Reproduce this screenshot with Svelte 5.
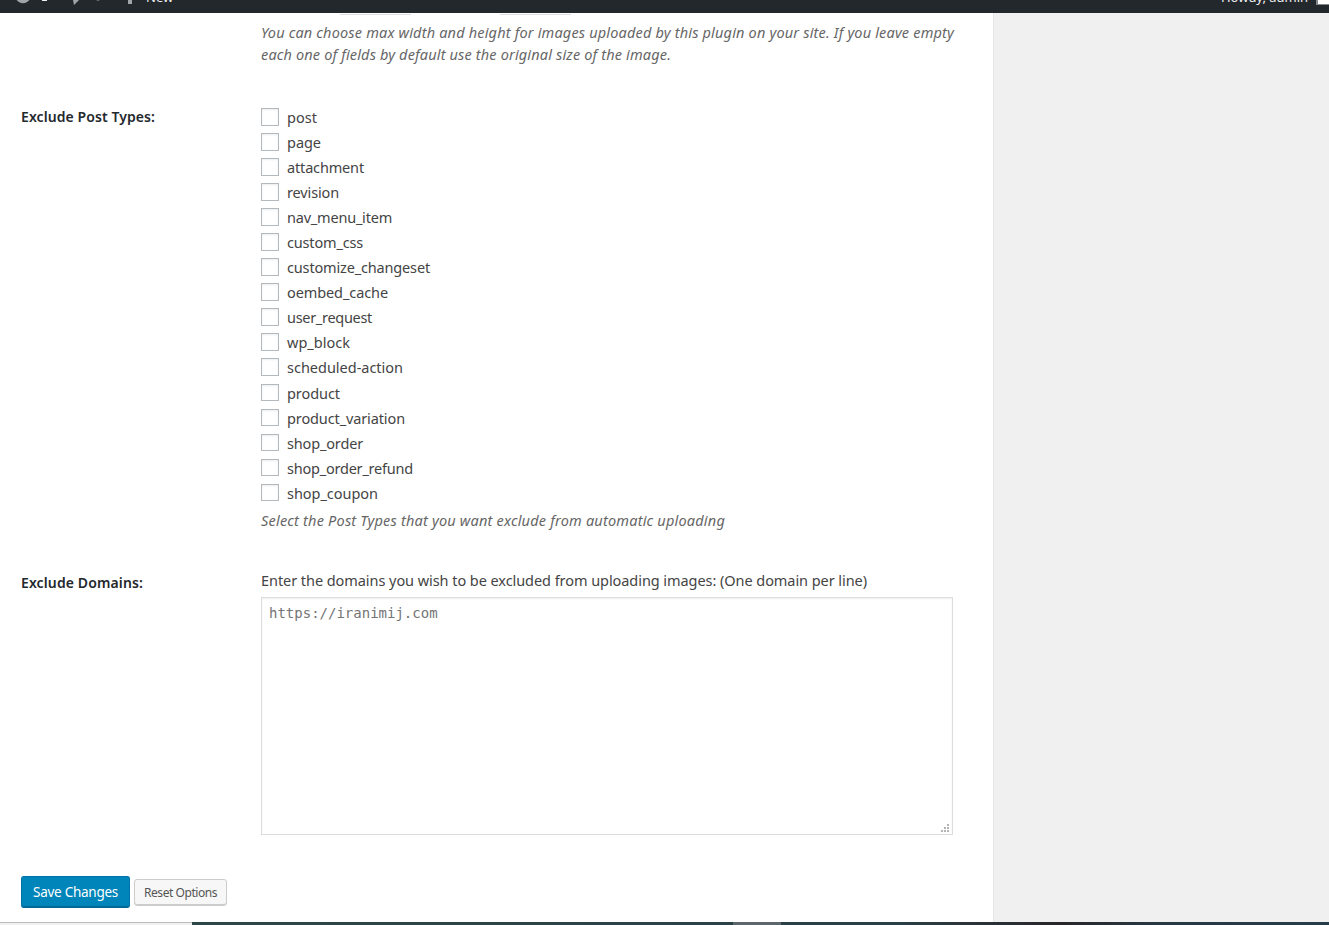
<script>
  const postTypes = [
    ['post', 30], ['page', 34], ['attachment', 77], ['revision', 52],
    ['nav_menu_item', 105], ['custom_css', 76], ['customize_changeset', 143],
    ['oembed_cache', 101], ['user_request', 85], ['wp_block', 63],
    ['scheduled-action', 116], ['product', 53], ['product_variation', 118],
    ['shop_order', 76], ['shop_order_refund', 126], ['shop_coupon', 91]
  ];

  // Spreads the letters of a line so that it fills its set measure.
  function measure(node, width) {
    node.style.letterSpacing = '0px';
    const natural = node.getBoundingClientRect().width;
    node.style.letterSpacing = (width - natural) / node.textContent.length + 'px';
  }
</script>

<div class="page">
  <header>
    <div class="left">
      <svg width="140" height="13" viewBox="0 0 140 13" fill="#a0a5aa">
        <path d="M16 -1a8 8 0 0 0 14 0l-3-1a5 5 0 0 1-8 0z" />
        <path d="M69 -5h15v5h-5l-5 5-1-5h-4z" />
        <path d="M95 -1q3 3 6 0z" />
        <path d="M128 -6h4v10h-4z" />
        <path d="M42 0h5v1h-5z" fill="#eee" />
      </svg>
      <span class="new">New</span>
    </div>
    <div class="account"><span use:measure={87}>Howdy, admin</span><i></i></div>
  </header>

  <main>
    <div class="dimensions"><i></i><i></i></div>
    <p class="hint top">
      <span use:measure={693}>You can choose max width and height for images uploaded by this plugin on your site. If you leave empty</span><br />
      <span use:measure={410}>each one of fields by default use the original size of the image.</span>
    </p>

    <section class="types">
      <h2><span use:measure={134}>Exclude Post Types:</span></h2>
      <div>
        {#each postTypes as [name, width]}
          <label><input type="checkbox" /><span use:measure={width}>{name}</span></label>
        {/each}
        <p class="hint"><span use:measure={464}>Select the Post Types that you want exclude from automatic uploading</span></p>
      </div>
    </section>

    <section class="domains">
      <h2><span use:measure={122}>Exclude Domains:</span></h2>
      <div>
        <p><span use:measure={606}>Enter the domains you wish to be excluded from uploading images: (One domain per line)</span></p>
        <div class="area">
          <textarea placeholder="https://iranimij.com" spellcheck="false"></textarea>
          <svg class="grip" width="8" height="8" fill="#b4b4b4">
            <path d="M6 0h2v2h-2zM3 3h2v2h-2zM6 3h2v2h-2zM0 6h2v2h-2zM3 6h2v2h-2zM6 6h2v2h-2z" />
          </svg>
        </div>
      </div>
    </section>

    <div class="buttons">
      <button class="primary"><span use:measure={85}>Save Changes</span></button>
      <button class="reset"><span use:measure={73}>Reset Options</span></button>
    </div>
  </main>
  <footer><i class="window"></i><i class="active"></i></footer>
</div>

<style>
  :global(body) { margin: 0; }
  .page {
    width: 1329px; height: 925px; overflow: hidden; background: #f0f0f0;
    display: flex; flex-direction: column; color: #444;
    font: 14.5px/22px "Noto Sans", sans-serif;
  }
  .page * { box-sizing: border-box; }
  span { white-space: nowrap; }
  p, h2 { margin: 0; }
  i { display: block; }
  header {
    height: 13px; flex: none; background: #23282d; overflow: hidden; color: #eee;
    display: flex; justify-content: space-between; font-size: 13px; line-height: 20px;
  }
  header svg { display: block; flex: none; }
  .left, .account { display: flex; align-items: flex-start; }
  .left { gap: 6px; }
  header span { margin-top: -13px; }
  .account { gap: 8px; }
  .account i { width: 13px; height: 5px; background: #fff; border: 1px solid #82878c; border-width: 0 0 1px 2px; }
  main {
    flex: 1; min-height: 0; width: 994px; background: #fff; border-right: 1px solid #e5e5e5;
    padding-left: 21px; display: flex; flex-direction: column;
  }
  .dimensions { height: 2px; flex: none; display: flex; gap: 89px; padding-left: 319px; }
  .dimensions i { width: 71px; border-bottom: 1px solid #ddd; background: #fff; }
  .hint { color: #666; font-style: italic; }
  .top { padding: 6px 0 0 240px; height: 90px; }
  section { display: grid; grid-template-columns: 240px 692px; align-items: start; }
  h2 { font-size: 14px; line-height: 22px; font-weight: 600; color: #23282d; }
  .types { height: 465px; }
  .types h2 { padding-top: 1px; }
  label { display: flex; gap: 8px; height: 25.06px; align-items: flex-start; line-height: 25px; }
  label input {
    appearance: none; margin: 3px 0 0; width: 18px; height: 17.5px; flex: none;
    border: 1px solid #b4b9be; background: #fff; box-shadow: inset 0 1px 2px rgba(0,0,0,.08);
  }
  .types .hint { padding-top: 3.3px; }
  .domains h2 { padding-top: 2px; }
  .domains p { margin-top: -1px; }
  .area { margin-top: 6px; width: 692px; height: 238px; position: relative; }
  textarea {
    display: block; width: 100%; height: 100%; resize: none; outline: none;
    border: 1px solid #ddd; background: #fff; padding: 5px 7px;
    box-shadow: inset 0 1px 2px rgba(0,0,0,.07); font: 14px/20px "DejaVu Sans Mono", monospace;
  }
  textarea::placeholder { color: #757575; opacity: 1; }
  .grip { position: absolute; right: 4px; bottom: 3px; }
  .buttons { display: flex; gap: 4px; align-items: center; margin-top: 41px; }
  button { border-radius: 3px; padding: 0; font-family: "Noto Sans", sans-serif; }
  .primary {
    width: 109px; height: 32px; color: #fff; font-size: 13.5px; background: #0085ba;
    border: 1px solid #0073aa; border-bottom-color: #006799; box-shadow: inset 0 -1px #006799;
  }
  .reset {
    width: 93px; height: 27px; color: #555; font-size: 12px; background: #f7f7f7;
    border: 1px solid #ccc; box-shadow: inset 0 -1px #ccc;
  }
  footer {
    height: 3px; flex: none; display: flex; justify-content: flex-start; gap: 541px;
    background: linear-gradient(90deg, #2e484b 0, #2b3f46 900px, #28262a 1060px, #283944 1160px, #273c49);
  }
  .window { width: 192px; background: #f0f0f0; border-top: 1px solid #bbb; }
  .active { width: 48px; background: #5b676d; }
</style>
